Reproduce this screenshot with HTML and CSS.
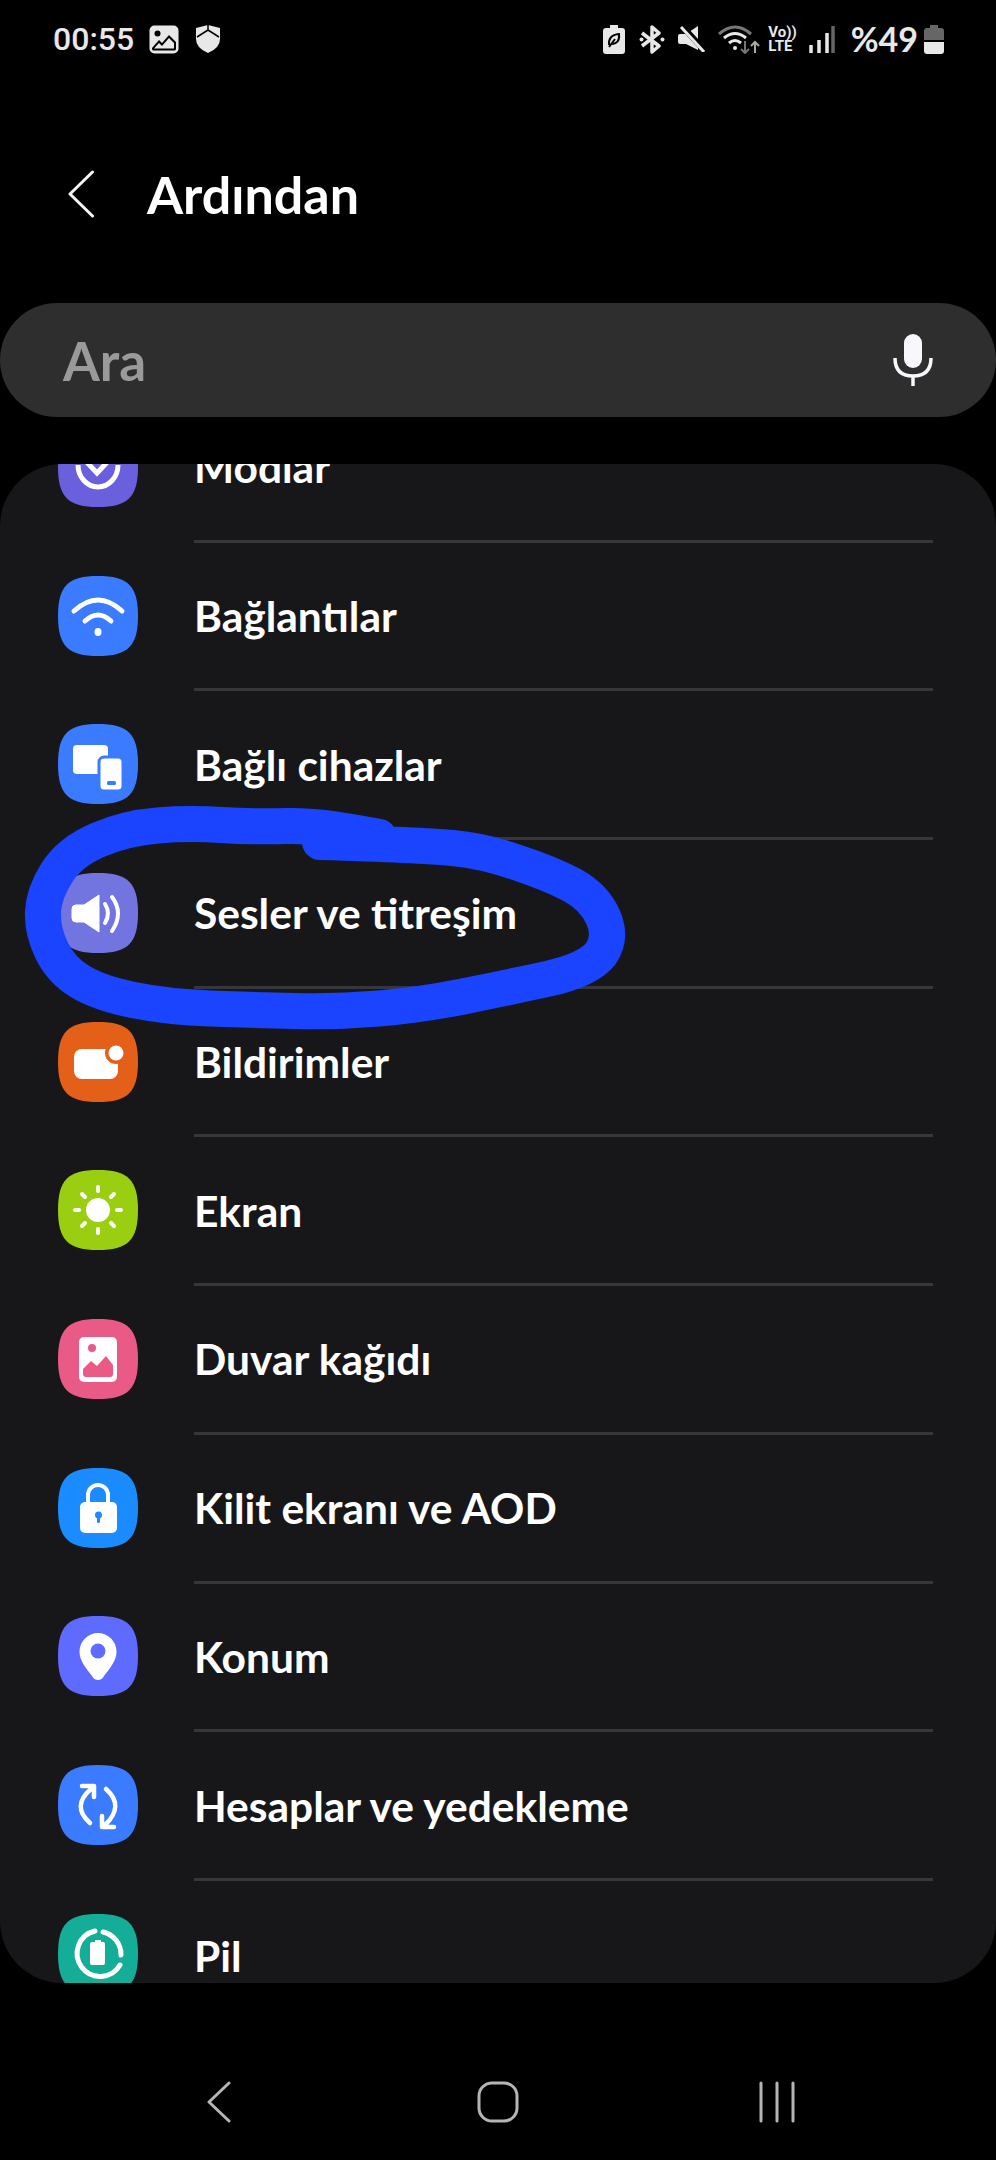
FILE: index.html
```html
<!DOCTYPE html>
<html lang="tr">
<head>
    <meta charset="utf-8">
    <title>Ayarlar</title>
    <link rel="stylesheet" href="styles.css">
</head>
<body>
    <svg width="0" height="0" class="defs">
        <symbol id="squircle" viewBox="0 0 80 80">
            <path d="M40 0C70 0 80 10 80 40S70 80 40 80 0 70 0 40 10 0 40 0Z"/>
        </symbol>
    </svg>

    <div class="status">
        <div class="status-left">
            <span class="time">00:55</span>
            <svg width="30" height="29" viewBox="0 0 30 29"><rect x="0.5" y="0.5" width="29" height="28" rx="5" fill="#e8e8e8"/><circle cx="8.5" cy="8.5" r="3" fill="#000"/><path d="M3 23 L10 15 L13 18 L20 10 L27 17 V24 Q27 25.500 25 25.500 H5 Q3 25.500 3 24Z" fill="#000"/><path d="M5 23.500 L10 18 L13 21 L20 13 L25 18 V23.500Z" fill="#e8e8e8"/></svg>
            <svg class="shield" width="24" height="28" viewBox="0 0 24 28"><path d="M12 0 L24 3 V14 Q24 23 12 28 Q0 23 0 14 V3Z" fill="#e8e8e8"/><path d="M1 12 L12 5 L23 12 M12 0 V5" fill="none" stroke="#000" stroke-width="1.500"/></svg>
        </div>
        <div class="status-right">
            <svg width="22" height="29" viewBox="0 0 22 29"><path d="M7 0H15V3H19Q22 3 22 6V26Q22 29 19 29H3Q0 29 0 26V6Q0 3 3 3H7Z" fill="#e8e8e8"/><path d="M6 20 Q5 10 16 9 Q17 19 8 19 M6 22 L12 14" fill="none" stroke="#000" stroke-width="2"/></svg>
            <svg class="gap-bt" width="26" height="29" viewBox="0 0 26 29"><path d="M3 8 L20 21 L13 27 V2 L20 8 L3 21" fill="none" stroke="#e8e8e8" stroke-width="3.500" stroke-linejoin="round"/><circle cx="2.500" cy="14.500" r="2" fill="#e8e8e8"/><circle cx="23.500" cy="14.500" r="2" fill="#e8e8e8"/></svg>
            <svg class="gap-mute" width="27" height="26" viewBox="0 0 27 26"><path d="M2 8H8L20 0V24L8 18H2Q0 18 0 16V10Q0 8 2 8Z" fill="#e8e8e8"/><path d="M3 -1 L27 25" stroke="#000" stroke-width="6"/><path d="M3 1 L26 26" stroke="#e8e8e8" stroke-width="3"/></svg>
            <svg class="gap-wifi" width="42" height="30" viewBox="0 0 42 30"><path d="M1 10 Q17 -4 33 10" fill="none" stroke="#777" stroke-width="3"/><path d="M6 14 Q17 5 28 14 M11 19 Q17 14 23 19" fill="none" stroke="#e8e8e8" stroke-width="3"/><circle cx="17" cy="24" r="2" fill="#e8e8e8"/><path d="M27 17 V29 M23 25 L27 29 L31 25" fill="none" stroke="#777" stroke-width="2"/><path d="M37 29 V18 M33 22 L37 18 L41 22" fill="none" stroke="#aaa" stroke-width="2"/></svg>
            <div class="volte"><span>Vo))</span><span>LTE</span></div>
            <svg class="gap-signal" width="26" height="27" viewBox="0 0 26 27"><path d="M2 19V27M10 14V27M18 7V27" stroke="#e8e8e8" stroke-width="3.500"/><path d="M24 0V27" stroke="#666" stroke-width="3.500"/></svg>
            <span class="percent">%49</span>
            <svg class="gap-batt" width="20" height="29" viewBox="0 0 20 29"><path d="M6 0H14V3H17Q20 3 20 6V15H0V6Q0 3 3 3H6Z" fill="#666"/><path d="M0 17H20V26Q20 29 17 29H3Q0 29 0 26Z" fill="#e8e8e8"/></svg>
        </div>
    </div>

    <div class="header">
        <svg width="26" height="48" viewBox="0 0 26 48"><path d="M24.500 2 L2 24 L24.500 46" fill="none" stroke="#f5f5f5" stroke-width="3" stroke-linecap="round" stroke-linejoin="round"/></svg>
        <h1>Ardından</h1>
    </div>

    <div class="search">
        <span class="search-text">Ara</span>
        <svg width="40" height="52" viewBox="0 0 40 52"><rect x="11" y="0" width="18" height="34" rx="9" fill="#f8f8fc"/><path d="M2 24 Q2 42 20 42 Q38 42 38 24 M20 42 V52" fill="none" stroke="#f8f8fc" stroke-width="3.500"/></svg>
    </div>

    <div class="card">
        <div class="list">
            <div class="row">
                <svg class="icon purple" viewBox="0 0 80 80"><use href="#squircle"/><path d="M20 38A20 22 0 0 0 60 38M24 30L39 46L54 30" fill="none" stroke="#fff" stroke-width="5"/></svg>
                <div class="label">Modlar</div>
            </div>
            <div class="row">
                <svg class="icon blue" viewBox="0 0 80 80"><use href="#squircle"/><path d="M16 35Q40 13 64 35M27 45Q40 33 53 45" fill="none" stroke="#fff" stroke-width="5" stroke-linecap="round"/><ellipse cx="40" cy="56" rx="3.500" ry="4" fill="#fff"/></svg>
                <div class="label">Bağlantılar</div>
            </div>
            <div class="row">
                <svg class="icon blue" viewBox="0 0 80 80"><use href="#squircle"/><rect x="15" y="21" width="35" height="29" rx="4" fill="#fff"/><rect x="41" y="33" width="24" height="34" rx="5" fill="#fff" stroke="#3a7bff" stroke-width="3"/><rect x="49" y="57" width="9" height="4" rx="1.500" fill="#3a7bff"/></svg>
                <div class="label">Bağlı cihazlar</div>
            </div>
            <div class="row">
                <svg class="icon violet" viewBox="0 0 80 80"><use href="#squircle"/><path d="M41 22V59L26 49H18Q14 49 14 45V36Q14 32 18 32H26Z" fill="#fff" stroke="#fff" stroke-width="1" stroke-linejoin="round"/><path d="M47 31Q53 40 47 50M54 24Q66 40 54 58" fill="none" stroke="#fff" stroke-width="4" stroke-linecap="round"/></svg>
                <div class="label">Sesler ve titreşim</div>
            </div>
            <div class="row">
                <svg class="icon orange" viewBox="0 0 80 80"><use href="#squircle"/><rect x="16" y="27" width="44" height="30" rx="8" fill="#fff"/><circle cx="58" cy="31" r="11" fill="#e45f17"/><circle cx="58" cy="31" r="7.500" fill="#fff"/></svg>
                <div class="label">Bildirimler</div>
            </div>
            <div class="row">
                <svg class="icon green" viewBox="0 0 80 80"><use href="#squircle"/><circle cx="40" cy="40" r="12" fill="#fff"/><path d="M40 17V21M40 59V63M17 40H21M59 40H63M24 24L27 27M53 53L56 56M24 56L27 53M53 27L56 24" stroke="#fff" stroke-width="4" stroke-linecap="round"/></svg>
                <div class="label">Ekran</div>
            </div>
            <div class="row">
                <svg class="icon pink" viewBox="0 0 80 80"><use href="#squircle"/><rect x="21" y="18" width="38" height="45" rx="5" fill="#fff"/><circle cx="34" cy="29" r="4" fill="#ea5a87"/><path d="M25 50L33 42L39 47L48 37L55 46V55Q55 58 52 58H28Q25 58 25 55Z" fill="#ea5a87"/></svg>
                <div class="label">Duvar kağıdı</div>
            </div>
            <div class="row">
                <svg class="icon sky" viewBox="0 0 80 80"><use href="#squircle"/><path d="M30 36V27A10 10 0 0 1 50 27V36" fill="none" stroke="#fff" stroke-width="4"/><rect x="22" y="34" width="37" height="31" rx="5" fill="#fff"/><circle cx="40.500" cy="47" r="3.500" fill="#1a8cff"/><rect x="39" y="47" width="3" height="8" rx="1.500" fill="#1a8cff"/></svg>
                <div class="label">Kilit ekranı ve AOD</div>
            </div>
            <div class="row">
                <svg class="icon indigo" viewBox="0 0 80 80"><use href="#squircle"/><path d="M40 64Q36 64 34 60C28 52 21.500 45 21.500 35.500A18.500 18.500 0 0 1 58.500 35.500C58.500 45 52 52 46 60Q44 64 40 64Z" fill="#fff"/><circle cx="40" cy="35" r="7.500" fill="#5f6bff"/></svg>
                <div class="label">Konum</div>
            </div>
            <div class="row">
                <svg class="icon blue" viewBox="0 0 80 80"><use href="#squircle"/><path d="M33 24Q13 41 32 58M24 21H36V32M47 60Q67 41 48 24M56 62H44V51" fill="none" stroke="#fff" stroke-width="4.500" stroke-linecap="round" stroke-linejoin="round"/></svg>
                <div class="label">Hesaplar ve yedekleme</div>
            </div>
            <div class="row">
                <svg class="icon teal" viewBox="0 0 80 80"><use href="#squircle"/><path d="M45 18A23 23 0 0 1 63 41M62 51A23 23 0 1 1 37 17" fill="none" stroke="#fff" stroke-width="5" stroke-linecap="round"/><path d="M37 26H43V28H45Q47 28 47 30V49Q47 51 45 51H34Q32 51 32 49V30Q32 28 34 28H37Z" fill="#fff"/></svg>
                <div class="label">Pil</div>
            </div>
        </div>
    </div>

    <div class="nav">
        <div class="nav-item"><svg width="24" height="42" viewBox="0 0 24 42"><path d="M22 2L2 21L22 40" fill="none" stroke="#b5b5b5" stroke-width="3" stroke-linecap="round" stroke-linejoin="round"/></svg></div>
        <div class="nav-item"><svg width="42" height="42" viewBox="0 0 42 42"><rect x="2" y="2" width="38" height="38" rx="13" fill="none" stroke="#b5b5b5" stroke-width="3"/></svg></div>
        <div class="nav-item"><svg width="36" height="42" viewBox="0 0 36 42"><path d="M2 2V40M18 2V40M34 2V40" fill="none" stroke="#b5b5b5" stroke-width="3" stroke-linecap="round"/></svg></div>
    </div>

    <!-- marker circle drawn over the screenshot -->
    <svg class="scribble" viewBox="0 0 996 2160">
        <path d="M320 842Q421 845 452.500 848Q484 851 515.500 862Q549 873 572 885Q594 897 603 917Q612 937 601 953.500Q588 970 547 979Q505 988 463 996.500Q421 1005 379 1008.500Q337 1012 295 1011Q253 1010 210.500 1008.500Q168 1007 133 1000Q99 993 80 981.500Q61 970 51.500 950Q42 930 43 911.500Q44 893 57 872.500Q70 852 98 840Q126 828 157.500 825.500Q189 823 221 825Q253 827 286.500 826Q320 825 379 837" fill="none" stroke="#1a44ff" stroke-width="36" stroke-linecap="round" stroke-linejoin="round"/>
    </svg>
</body>
</html>
```

FILE: styles.css
```css
html, body {
    margin: 0;
    padding: 0;
}
body {
    position: relative;
    width: 996px;
    height: 2160px;
    overflow: hidden;
    background-color: #000;
    color: #fff;
    font-family: Lato, sans-serif;
}
.defs {
    display: block;
    height: 0;
}
.status {
    display: flex;
    justify-content: space-between;
    align-items: center;
    height: 78px;
    padding: 0 52px 0 53px;
}
.status-left, .status-right {
    display: flex;
    align-items: center;
}
.time {
    font-family: Roboto, sans-serif;
    font-size: 32px;
    font-weight: 500;
    color: #e8e8e8;
    margin-right: 15px;
}
.shield {
    margin-left: 17px;
}
.gap-bt {
    margin-left: 14px;
}
.gap-mute {
    margin-left: 13px;
}
.gap-wifi {
    margin-left: 13px;
}
.volte {
    display: flex;
    flex-direction: column;
    margin-left: 8px;
    font-family: Roboto, sans-serif;
    font-size: 15px;
    font-weight: 700;
    line-height: 14px;
    color: #e8e8e8;
}
.gap-signal {
    margin-left: 12px;
}
.percent {
    margin-left: 16px;
    font-size: 34px;
    font-weight: 700;
    line-height: 30px;
    color: #e8e8e8;
}
.gap-batt {
    margin-left: 6px;
}
.header {
    display: flex;
    align-items: center;
    gap: 53px;
    height: 225px;
    padding: 6px 0 0 68px;
    box-sizing: border-box;
}
h1 {
    margin: 0;
    font-size: 52px;
    font-weight: 700;
    color: #fff;
}
.search {
    display: flex;
    justify-content: space-between;
    align-items: center;
    height: 114px;
    padding: 0 63px;
    border-radius: 57px;
    background-color: #2e2e2e;
}
.search-text {
    font-size: 53px;
    font-weight: 700;
    color: #9a9a9a;
}
.card {
    height: 1519px;
    margin-top: 47px;
    border-radius: 62px;
    background-color: #17171a;
    overflow: hidden;
}
.list {
    margin-top: -70px;
}
.row {
    display: flex;
    height: 148.7px;
    padding: 0 63px 0 58px;
    box-sizing: border-box;
}
.icon {
    flex: none;
    align-self: center;
    width: 80px;
    height: 80px;
    margin-bottom: 3px;
}
.label {
    flex: 1;
    display: flex;
    align-items: center;
    margin-left: 56px;
    border-bottom: 3px solid #37373a;
    font-size: 42.5px;
    font-weight: 700;
}
.row:last-child .label {
    border-bottom: none;
}
.purple { fill: #6a5fdc; }
.blue { fill: #3a7bff; }
.violet { fill: #7275e0; }
.orange { fill: #e45f17; }
.green { fill: #9ace10; }
.pink { fill: #ea5a87; }
.sky { fill: #1a8cff; }
.indigo { fill: #5f6bff; }
.teal { fill: #14ad97; }
.nav {
    display: flex;
    justify-content: center;
    height: 177px;
    padding-top: 98px;
    box-sizing: border-box;
}
.nav-item {
    display: flex;
    justify-content: center;
    width: 279px;
    height: 42px;
}
.scribble {
    position: absolute;
    left: 0;
    top: 0;
    width: 996px;
    height: 2160px;
    pointer-events: none;
}
```
